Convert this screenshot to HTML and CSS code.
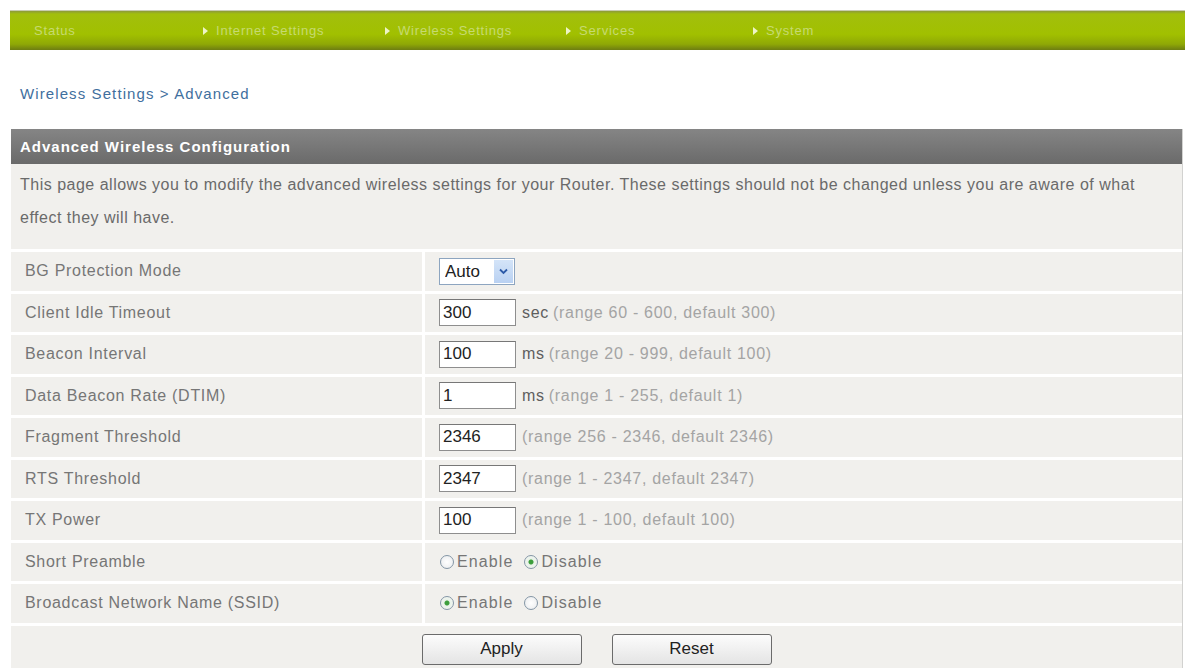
FILE: index.html
```html
<!DOCTYPE html>
<html lang="en">
<head>
    <meta charset="UTF-8">
    <title>Wireless Settings - Advanced</title>
    <link rel="stylesheet" href="styles.css">
</head>
<body>
    <div class="topnav">
        <span class="nav-item">Status</span>
        <span class="nav-item"><i class="arrow"></i>Internet Settings</span>
        <span class="nav-item"><i class="arrow"></i>Wireless Settings</span>
        <span class="nav-item"><i class="arrow"></i>Services</span>
        <span class="nav-item"><i class="arrow"></i>System</span>
    </div>

    <div class="crumb">Wireless Settings &gt; Advanced</div>

    <div class="panel">
        <div class="panel-head">Advanced Wireless Configuration</div>
        <div class="panel-desc">This page allows you to modify the advanced wireless settings for your Router. These settings should not be changed unless you are aware of what effect they will have.</div>

        <div class="row">
            <div class="label">BG Protection Mode</div>
            <div class="value">
                <span class="select-box">
                    <select><option>Auto</option><option>On</option><option>Off</option></select>
                    <span class="select-arrow"><svg width="9" height="7" viewBox="0 0 9 7"><path d="M1 1.5 L4.5 5 L8 1.5" fill="none" stroke="#2c5aa8" stroke-width="1.8"/></svg></span>
                </span>
            </div>
        </div>
        <div class="row">
            <div class="label">Client Idle Timeout</div>
            <div class="value"><input type="text" value="300"><span class="unit">sec</span> <span class="hint">(range 60 - 600, default 300)</span></div>
        </div>
        <div class="row">
            <div class="label">Beacon Interval</div>
            <div class="value"><input type="text" value="100"><span class="unit">ms</span> <span class="hint">(range 20 - 999, default 100)</span></div>
        </div>
        <div class="row">
            <div class="label">Data Beacon Rate (DTIM)</div>
            <div class="value"><input type="text" value="1"><span class="unit">ms</span> <span class="hint">(range 1 - 255, default 1)</span></div>
        </div>
        <div class="row">
            <div class="label">Fragment Threshold</div>
            <div class="value"><input type="text" value="2346"><span class="hint">(range 256 - 2346, default 2346)</span></div>
        </div>
        <div class="row">
            <div class="label">RTS Threshold</div>
            <div class="value"><input type="text" value="2347"><span class="hint">(range 1 - 2347, default 2347)</span></div>
        </div>
        <div class="row">
            <div class="label">TX Power</div>
            <div class="value"><input type="text" value="100"><span class="hint">(range 1 - 100, default 100)</span></div>
        </div>
        <div class="row">
            <div class="label">Short Preamble</div>
            <div class="value">
                <label class="radio"><input type="radio" name="preamble">Enable</label>
                <label class="radio"><input type="radio" name="preamble" checked>Disable</label>
            </div>
        </div>
        <div class="row">
            <div class="label">Broadcast Network Name (SSID)</div>
            <div class="value">
                <label class="radio"><input type="radio" name="ssid" checked>Enable</label>
                <label class="radio"><input type="radio" name="ssid">Disable</label>
            </div>
        </div>

        <div class="buttons">
            <button type="button">Apply</button>
            <button type="button">Reset</button>
        </div>
    </div>
</body>
</html>
```

FILE: styles.css
```css
body {
    margin: 0px;
    padding: 0px;
    background: #ffffff;
    font-family: "Liberation Sans", Arial, sans-serif;
    font-size: 16px;
    letter-spacing: 0.7px;
    color: #6e6e6e;
    height: 668px;
    overflow: hidden;
}

/* top menu bar */
.topnav {
    margin: 10px 5px 0px 10px;
    height: 39px;
    display: grid;
    grid-template-columns: 169px 182px 181px 187px auto;
    align-items: center;
    padding-left: 24px;
    background: linear-gradient(#8c9a3a 0px, #a2bf0c 3px, #a1c000 60%, #8fa806 85%, #6d7d12 100%);
    border-top: 1px solid #c8ccb0;
}
.nav-item {
    color: #c6da72;
    font-size: 13px;
    letter-spacing: 0.8px;
    white-space: nowrap;
}
.arrow {
    display: inline-block;
    width: 0px;
    height: 0px;
    border-left: 5px solid #eef4c6;
    border-top: 4px solid transparent;
    border-bottom: 4px solid transparent;
    margin-right: 8px;
    vertical-align: 0px;
}

.crumb {
    margin: 35px 0px 0px 20px;
    font-size: 15px;
    letter-spacing: 1.1px;
    line-height: 18px;
    color: #3f6f9e;
}

/* main box */
.panel {
    margin: 26px 7px 0px 11px;
    background: #ffffff;
    border-right: 1px solid #d2d2d0;
}
.panel-head {
    height: 35px;
    line-height: 35px;
    padding-left: 9px;
    background: linear-gradient(#858585, #6a6a6a);
    color: #ffffff;
    font-weight: bold;
    font-size: 15px;
    letter-spacing: 1px;
}
.panel-desc {
    background: #f1f0ed;
    padding: 4px 20px 15px 9px;
    line-height: 33px;
    letter-spacing: 0.5px;
    color: #6a6a6a;
    margin-bottom: 3px;
}

.row {
    display: grid;
    grid-template-columns: 411px 1fr;
    column-gap: 3px;
    margin-bottom: 3px;
}
.label,
.value {
    background: #f1f0ed;
    height: 38.5px;
    display: flex;
    align-items: center;
}
.label {
    padding-left: 14px;
    color: #767676;
}
.value {
    padding-left: 14px;
}

.value input[type="text"] {
    box-sizing: border-box;
    width: 77px;
    height: 27px;
    border: 1px solid #8e8e8e;
    border-top-color: #777;
    padding: 0px 3px;
    font-family: "Liberation Sans", Arial, sans-serif;
    font-size: 17px;
    color: #222;
    background: #fff;
    margin: 0px 6px 0px 0px;
}
.unit {
    color: #5e5e5e;
    margin-right: 4px;
}
.hint {
    color: #a4a4a4;
}

.select-box {
    position: relative;
    display: inline-block;
    box-sizing: border-box;
    width: 76px;
    height: 27px;
    border: 1px solid #8da5c0;
    background: #fff;
}
.select-box select {
    -webkit-appearance: none;
    appearance: none;
    border: none;
    background: transparent;
    width: 100%;
    height: 100%;
    padding: 0px 0px 0px 5px;
    font-family: "Liberation Sans", Arial, sans-serif;
    font-size: 17px;
    color: #222;
    outline: none;
}
.select-arrow {
    position: absolute;
    right: 1px;
    top: 1px;
    bottom: 1px;
    width: 19px;
    background: linear-gradient(#d4e4f8, #b9d1f2);
    display: flex;
    align-items: center;
    justify-content: center;
}

.radio {
    display: inline-flex;
    align-items: center;
    color: #767676;
    margin-right: 10px;
    letter-spacing: 1.1px;
}
.radio input {
    -webkit-appearance: none;
    appearance: none;
    width: 14px;
    height: 14px;
    margin: 0px 3px 0px 1px;
    border: 1px solid #8496a6;
    border-radius: 50%;
    background: radial-gradient(circle, #ffffff, #e8eaec);
}
.radio input:checked {
    background: radial-gradient(circle, #3c9e3c 0px, #3c9e3c 2px, #e9f2e9 3px, #f4f6f4 100%);
}

.buttons {
    background: #f1f0ed;
    height: 45px;
    display: flex;
    justify-content: center;
    align-items: flex-start;
    gap: 30px;
    padding-top: 8px;
    box-sizing: border-box;
}
.buttons button {
    width: 160px;
    height: 31px;
    border: 1px solid #6b6b6b;
    border-radius: 3px;
    background: linear-gradient(#fcfcfc, #e4e4e4);
    font-family: "Liberation Sans", Arial, sans-serif;
    font-size: 17px;
    color: #222;
}
```
